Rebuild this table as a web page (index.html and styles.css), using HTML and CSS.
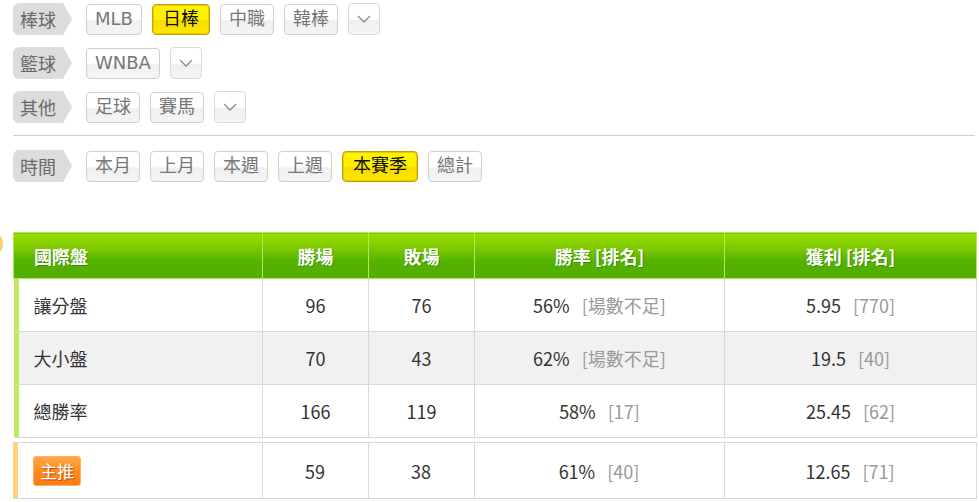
FILE: index.html
```html
<!DOCTYPE html>
<html lang="zh-Hant">
<head>
    <meta charset="UTF-8">
    <title>戰績統計</title>
    <link rel="stylesheet" href="styles.css">
</head>
<body>
    <div class="filters">
        <div class="filter-row">
            <span class="label">棒球</span>
            <span class="btn">MLB</span>
            <span class="btn active">日棒</span>
            <span class="btn">中職</span>
            <span class="btn">韓棒</span>
            <span class="btn more"><svg width="14" height="8" viewBox="0 0 14 8"><polyline points="1,1 7,7 13,1" /></svg></span>
        </div>
        <div class="filter-row">
            <span class="label">籃球</span>
            <span class="btn">WNBA</span>
            <span class="btn more"><svg width="14" height="8" viewBox="0 0 14 8"><polyline points="1,1 7,7 13,1" /></svg></span>
        </div>
        <div class="filter-row">
            <span class="label">其他</span>
            <span class="btn">足球</span>
            <span class="btn">賽馬</span>
            <span class="btn more"><svg width="14" height="8" viewBox="0 0 14 8"><polyline points="1,1 7,7 13,1" /></svg></span>
        </div>
    </div>

    <hr class="divider">

    <div class="filter-row time-row">
        <span class="label">時間</span>
        <span class="btn">本月</span>
        <span class="btn">上月</span>
        <span class="btn">本週</span>
        <span class="btn">上週</span>
        <span class="btn active">本賽季</span>
        <span class="btn">總計</span>
    </div>

    <div class="stats">
        <span class="coin"></span>
        <table class="stats-table">
            <colgroup>
                <col class="c-name"><col class="c-num"><col class="c-num"><col class="c-rate"><col class="c-profit">
            </colgroup>
            <thead>
                <tr>
                    <th class="name">國際盤</th>
                    <th>勝場</th>
                    <th>敗場</th>
                    <th>勝率 [排名]</th>
                    <th>獲利 [排名]</th>
                </tr>
            </thead>
            <tbody>
                <tr>
                    <td class="name">讓分盤</td>
                    <td>96</td>
                    <td>76</td>
                    <td>56% <span class="rank">[場數不足]</span></td>
                    <td>5.95 <span class="rank">[770]</span></td>
                </tr>
                <tr class="alt">
                    <td class="name">大小盤</td>
                    <td>70</td>
                    <td>43</td>
                    <td>62% <span class="rank">[場數不足]</span></td>
                    <td>19.5 <span class="rank">[40]</span></td>
                </tr>
                <tr>
                    <td class="name">總勝率</td>
                    <td>166</td>
                    <td>119</td>
                    <td>58% <span class="rank">[17]</span></td>
                    <td>25.45 <span class="rank">[62]</span></td>
                </tr>
            </tbody>
        </table>

        <table class="stats-table pick">
            <colgroup>
                <col class="c-name"><col class="c-num"><col class="c-num"><col class="c-rate"><col class="c-profit">
            </colgroup>
            <tbody>
                <tr>
                    <td class="name"><span class="badge">主推</span></td>
                    <td>59</td>
                    <td>38</td>
                    <td>61% <span class="rank">[40]</span></td>
                    <td>12.65 <span class="rank">[71]</span></td>
                </tr>
            </tbody>
        </table>
    </div>
</body>
</html>
```

FILE: styles.css
```css
* {
    margin: 0;
    padding: 0;
    box-sizing: border-box;
}

body {
    background: #fff;
    color: #333;
    font-family: "Noto Sans CJK TC", "Noto Sans", sans-serif;
    font-size: 18px;
    width: 979px;
    overflow: hidden;
}

.filters {
    display: flex;
    flex-direction: column;
    gap: 12px;
    padding: 3px 0 0 13px;
}

.filter-row {
    display: flex;
    align-items: center;
    gap: 10px;
    height: 32px;
}

.label {
    display: flex;
    align-items: center;
    height: 32px;
    width: 59px;
    padding-left: 7px;
    margin-right: 4px;
    background: #dcdcdc;
    color: #6a6a6a;
    border-radius: 6px 0 0 6px;
    clip-path: polygon(0 0, 50px 0, 59px 50%, 50px 100%, 0 100%);
    line-height: 1;
}

.btn {
    display: flex;
    align-items: center;
    justify-content: center;
    height: 31px;
    padding: 0 8px;
    border: 1px solid #cfcfcf;
    border-radius: 4px;
    background: linear-gradient(#fff 0%, #fff 50%, #f0f0f0 55%, #f5f5f5 100%);
    color: #777;
    font-family: "DejaVu Sans", "Noto Sans CJK TC", sans-serif;
    line-height: 1;
    cursor: pointer;
}

.btn.active {
    padding: 0 10px;
    background: linear-gradient(#fff400 0%, #ffee00 50%, #f7dc00 55%, #ffe600 100%);
    border-color: #c4a200;
    box-shadow: inset 0 0 0 1px #ecc800;
    color: #111;
}

.btn.more {
    width: 32px;
    height: 32px;
    padding: 0;
    border-color: #dadada;
}

.btn.more svg polyline {
    fill: none;
    stroke: #8a8a8a;
    stroke-width: 1.3;
}

.divider {
    border: none;
    border-top: 1px solid #cfcfcf;
    margin: 12px 4px 14px 13px;
}

.time-row {
    padding-left: 13px;
}

.stats {
    position: relative;
    margin: 50px 3px 0 13px;
}

.coin {
    position: absolute;
    left: -36px;
    top: -1px;
    width: 26px;
    height: 26px;
    border-radius: 50%;
    background: radial-gradient(circle at 70% 50%, #fff6c0 0%, #e8c040 45%, #a27a10 100%);
}

.stats-table {
    width: 963px;
    table-layout: fixed;
    border-collapse: collapse;
}

.c-name { width: 249px; }
.c-num { width: 106px; }
.c-rate { width: 250px; }
.c-profit { width: 252px; }

.stats-table th {
    height: 46px;
    background: linear-gradient(#9ade00 0%, #7cc800 35%, #56b200 60%, #52ae00 100%);
    color: #fff;
    font-size: 18px;
    font-weight: bold;
    text-align: center;
    border: 1px solid #b4e85c;
    text-shadow: 1px 1px 0 rgba(0, 80, 0, 0.35);
}

.stats-table th.name {
    text-align: left;
    padding-left: 20px;
}

.stats-table td {
    height: 53px;
    text-align: center;
    border: 1px solid #d9d9d9;
    color: #333;
}

.stats-table td.name {
    text-align: left;
    padding-left: 20px;
    border-left: none;
    box-shadow: inset 5px 0 0 #c0ea5a;
}

.stats-table tr.alt td {
    background: #f1f1f1;
}

.rank {
    color: #999;
    margin-left: 8px;
}

.pick {
    margin-top: 4px;
}

.pick td {
    height: 56px;
}

.pick td.name {
    box-shadow: inset 5px 0 0 #ffd27a;
}

.badge {
    display: inline-block;
    width: 48px;
    height: 30px;
    line-height: 28px;
    text-align: center;
    border-radius: 3px;
    background: linear-gradient(#ffa84a 0%, #ff8c1e 50%, #ff7a10 100%);
    border: 1px solid #ffb060;
    color: #fff;
    font-size: 17px;
    text-shadow: 1px 1px 1px rgba(120, 40, 0, 0.6);
}
```
